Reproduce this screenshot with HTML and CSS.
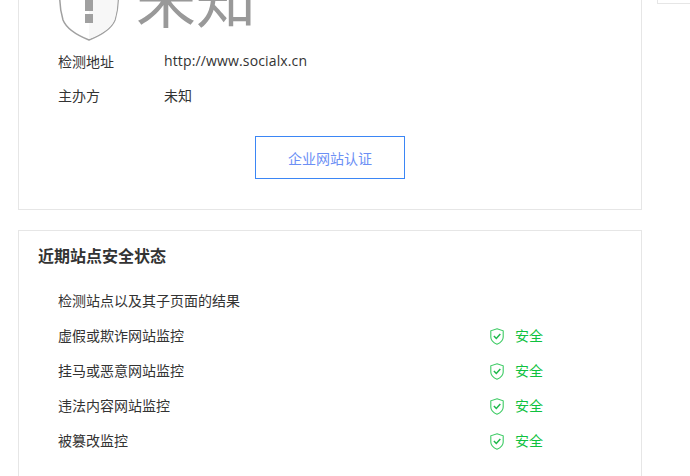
FILE: index.html
```html
<!DOCTYPE html>
<html lang="zh">
<head>
<meta charset="utf-8">
<title>网站安全检测</title>
<link rel="stylesheet" href="styles.css">
</head>
<body>
<div class="page">
  <main class="main">
    <section class="card card-top">
      <div class="verdict">
        <svg class="big-shield" viewBox="0 0 60 80" width="60" height="80" aria-hidden="true">
          <path d="M30 79C20 75 8 69 4 59 2 52 1 46 .8 39V3H59.200V39C59 46 58 52 56 59 52 69 40 75 30 79Z" fill="#fff" stroke="#a0a0a0" stroke-width="1.500"/>
          <path d="M30 78C40 74 51.500 68.500 55.500 59 57.500 52 58.500 46 58.500 39V3H30Z" fill="#f7f7f7"/>
          <path d="M26 20H34V50H26ZM26 53H34V62H26Z" fill="#a0a0a0"/>
        </svg>
        <span class="verdict-text">未知</span>
      </div>
      <div class="info-row"><span class="info-label">检测地址</span><span class="info-url">http://www.socialx.cn</span></div>
      <div class="info-row info-row-tight"><span class="info-label">主办方</span><span>未知</span></div>
      <div class="action"><a class="btn">企业网站认证</a></div>
    </section>
    <section class="card card-status">
      <h2 class="title">近期站点安全状态</h2>
      <div class="rows">
        <div class="row">检测站点以及其子页面的结果</div>
        <div class="row"><span class="row-name">虚假或欺诈网站监控</span><span class="safe"><svg class="shield" viewBox="0 0 14 17" width="14" height="17" aria-hidden="true"><path d="M7 .8 13.200 2.800V9C13.200 12.300 10.500 14.800 7 16.200 3.500 14.800 .8 12.300 .8 9V2.800Z" fill="none" stroke="#3ccb63" stroke-width="1.100"/><path d="M3.900 8 6.300 10.500 10.300 6" fill="none" stroke="#1fb84c" stroke-width="1.500"/></svg>安全</span></div>
        <div class="row"><span class="row-name">挂马或恶意网站监控</span><span class="safe"><svg class="shield" viewBox="0 0 14 17" width="14" height="17" aria-hidden="true"><path d="M7 .8 13.200 2.800V9C13.200 12.300 10.500 14.800 7 16.200 3.500 14.800 .8 12.300 .8 9V2.800Z" fill="none" stroke="#3ccb63" stroke-width="1.100"/><path d="M3.900 8 6.300 10.500 10.300 6" fill="none" stroke="#1fb84c" stroke-width="1.500"/></svg>安全</span></div>
        <div class="row"><span class="row-name">违法内容网站监控</span><span class="safe"><svg class="shield" viewBox="0 0 14 17" width="14" height="17" aria-hidden="true"><path d="M7 .8 13.200 2.800V9C13.200 12.300 10.500 14.800 7 16.200 3.500 14.800 .8 12.300 .8 9V2.800Z" fill="none" stroke="#3ccb63" stroke-width="1.100"/><path d="M3.900 8 6.300 10.500 10.300 6" fill="none" stroke="#1fb84c" stroke-width="1.500"/></svg>安全</span></div>
        <div class="row"><span class="row-name">被篡改监控</span><span class="safe"><svg class="shield" viewBox="0 0 14 17" width="14" height="17" aria-hidden="true"><path d="M7 .8 13.200 2.800V9C13.200 12.300 10.500 14.800 7 16.200 3.500 14.800 .8 12.300 .8 9V2.800Z" fill="none" stroke="#3ccb63" stroke-width="1.100"/><path d="M3.900 8 6.300 10.500 10.300 6" fill="none" stroke="#1fb84c" stroke-width="1.500"/></svg>安全</span></div>
      </div>
    </section>
  </main>
  <aside class="side"></aside>
</div>
</body>
</html>
```
FILE: styles.css
```css
html, body {
  margin: 0;
  padding: 0;
  height: 476px;
  overflow: hidden;
  background: #fff;
}
body {
  font-family: "Noto Sans CJK SC", "Liberation Sans", sans-serif;
  font-size: 14px;
  color: #333;
}
.page {
  display: flex;
  align-items: flex-start;
  gap: 15px;
  padding-left: 18px;
  margin-top: -40px;
}
.main {
  width: 624px;
  display: flex;
  flex-direction: column;
  gap: 20px;
  flex: none;
}
.side {
  width: 60px;
  height: 44px;
  border: 1px solid #e6e6e6;
  border-right: 0;
  box-sizing: border-box;
  flex: none;
}
.card {
  border: 1px solid #e6e6e6;
  box-sizing: border-box;
}
.card-top {
  height: 250px;
  padding: 0 39px;
  display: flex;
  flex-direction: column;
}
.verdict {
  display: flex;
  align-items: center;
  height: 80px;
  flex: none;
}
.big-shield {
  flex: none;
  margin-left: 1px;
}
.verdict-text {
  font-size: 60px;
  line-height: 72px;
  height: 80px;
  color: #999;
  margin-left: 17px;
}
.info-row {
  display: flex;
  height: 35px;
  align-items: center;
  flex: none;
}
.verdict + .info-row {
  margin-top: 2px;
}
.info-row-tight {
  height: 34px;
}
.info-label {
  width: 106px;
}
.info-url {
  font-family: "Open Sans", "Liberation Sans", sans-serif;
  font-size: 14px;
  letter-spacing: 0.14px;
}
.action {
  display: flex;
  justify-content: center;
  margin-top: 24px;
}
.btn {
  width: 150px;
  height: 43px;
  box-sizing: border-box;
  border: 1px solid #3b86f5;
  color: #6c8ff5;
  display: flex;
  align-items: center;
  justify-content: center;
}
.card-status {
  height: 300px;
  padding: 0 19px;
}
.title {
  margin: 0;
  font-size: 16px;
  line-height: 22px;
  font-weight: 700;
  padding-top: 13px;
  color: #333;
}
.rows {
  padding: 16px 20px 0;
}
.row {
  height: 35px;
  display: flex;
  align-items: center;
}
.row-name {
  width: 432px;
}
.safe {
  display: flex;
  align-items: center;
  color: #0fc13f;
}
.shield {
  margin-right: 11px;
  margin-top: 3px;
}
```
